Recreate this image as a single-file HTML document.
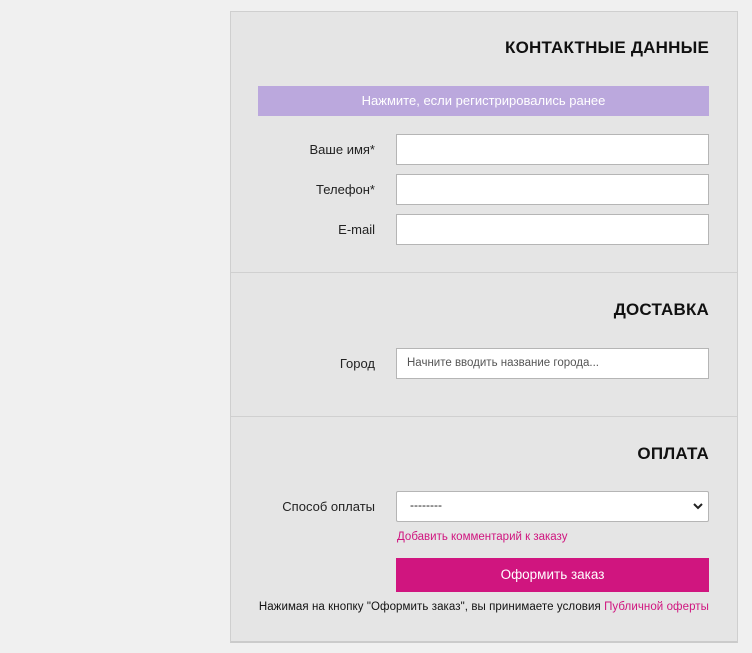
<!DOCTYPE html>
<html><head><meta charset="utf-8"><style>
*{box-sizing:border-box;margin:0;padding:0}
body{width:752px;height:653px;background:#f0f0f0;font-family:"Liberation Sans",Arial,sans-serif;position:relative;overflow:hidden}
.panel{position:absolute;left:230px;top:11px;width:508px;height:632px;background:#e5e5e5;border:1px solid #cfcfcf;border-bottom:2px solid #cbcbcb}
.a{position:absolute}
h2{position:absolute;right:28px;font-size:17px;font-weight:bold;color:#111;letter-spacing:0.2px}
.lbl{position:absolute;right:362px;font-size:13px;color:#222;text-align:right}
.in{position:absolute;left:165px;width:313px;height:31px;background:#fff;border:1px solid #b5b5b5}
.hr{position:absolute;left:0;right:0;height:1px;background:#d0d0d0}
</style></head><body>
<div class="panel">
<h2 style="top:26px">КОНТАКТНЫЕ ДАННЫЕ</h2>
<div class="a" style="left:27px;top:74px;width:451px;height:30px;background:#bba8dd;color:#fff;font-size:13px;text-align:center;line-height:30px">Нажмите, если регистрировались ранее</div>
<div class="lbl" style="top:130px">Ваше имя*</div><div class="in" style="top:122px"></div>
<div class="lbl" style="top:170px">Телефон*</div><div class="in" style="top:162px"></div>
<div class="lbl" style="top:210px">E-mail</div><div class="in" style="top:202px"></div>
<div class="hr" style="top:260px"></div>
<h2 style="top:288px">ДОСТАВКА</h2>
<div class="lbl" style="top:344px">Город</div>
<div class="in" style="top:336px;font-size:11.5px;color:#555;padding-left:10px;line-height:29px">Начните вводить название города...</div>
<div class="hr" style="top:404px"></div>
<h2 style="top:432px">ОПЛАТА</h2>
<div class="lbl" style="top:487px">Способ оплаты</div>
<div class="in" style="top:479px;border-radius:2px;font-size:12px;color:#222;padding-left:13px;line-height:27px">--------
<svg style="position:absolute;right:5px;top:11px" width="10" height="7" viewBox="0 0 10 7"><path d="M1 1l4 4 4-4" stroke="#222" stroke-width="2" fill="none"/></svg></div>
<div class="a" style="left:166px;top:519px;font-size:11.5px;color:#d0157f">Добавить комментарий к заказу</div>
<div class="a" style="left:165px;top:546px;width:313px;height:34px;background:#d0157f;color:#fff;font-size:13.5px;text-align:center;line-height:34px">Оформить заказ</div>
<div class="a" style="right:28px;top:589px;font-size:11.5px;letter-spacing:0.08px;color:#111;white-space:nowrap">Нажимая на кнопку "Оформить заказ", вы принимаете условия <span style="color:#d0157f">Публичной оферты</span></div>
</div>
</body></html>
